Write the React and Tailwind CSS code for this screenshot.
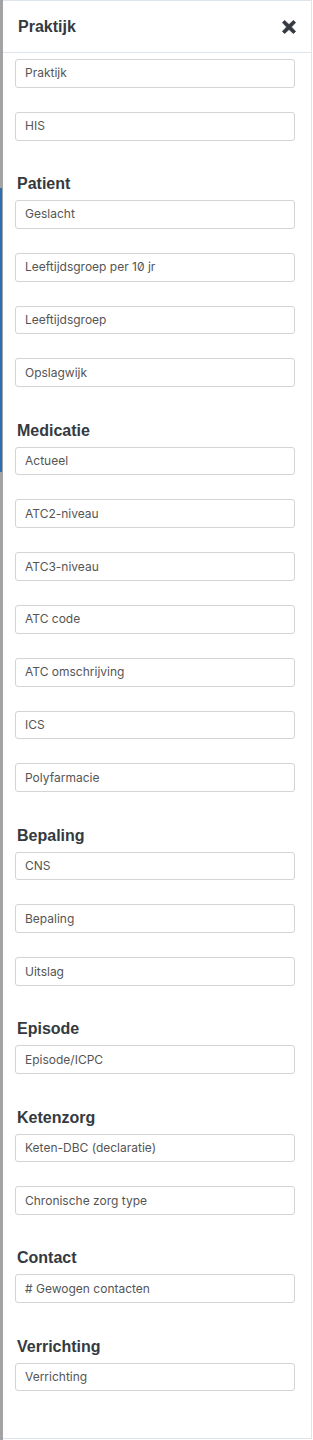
import React from "react";

const groups = [
  { title: null, fields: ["Praktijk", "HIS"] },
  { title: "Patient", fields: ["Geslacht", "Leeftijdsgroep per 10 jr", "Leeftijdsgroep", "Opslagwijk"] },
  {
    title: "Medicatie",
    fields: ["Actueel", "ATC2-niveau", "ATC3-niveau", "ATC code", "ATC omschrijving", "ICS", "Polyfarmacie"],
  },
  { title: "Bepaling", fields: ["CNS", "Bepaling", "Uitslag"] },
  { title: "Episode", fields: ["Episode/ICPC"] },
  { title: "Ketenzorg", fields: ["Keten-DBC (declaratie)", "Chronische zorg type"] },
  { title: "Contact", fields: ["# Gewogen contacten"] },
  { title: "Verrichting", fields: ["Verrichting"] },
];

// heavy "times" glyph, flared ends like the old font-awesome close icon
function CloseIcon() {
  return (
    <svg width="14" height="14" viewBox="0 0 14 14" className="text-[#343a40]">
      <path
        d="M0.4 2.6 L2.6 0.4 L7 4.6 L11.4 0.4 L13.6 2.6 L9.4 7 L13.6 11.4 L11.4 13.6 L7 9.4 L2.6 13.6 L0.4 11.4 L4.6 7 Z"
        fill="currentColor"
        stroke="currentColor"
        strokeWidth="0.8"
        strokeLinejoin="round"
      />
    </svg>
  );
}

function Field({ label }) {
  return (
    <div className="mb-6 flex h-[28.8px] w-[280px] items-center rounded-[3px] border border-[#d4d4d4] bg-white pl-[9px] text-[12px] text-[#555] [font-family:Inter,'Noto_Sans',sans-serif] [font-feature-settings:'zero']">
      {label}
    </div>
  );
}

export default function App() {
  return (
    <div className="flex h-[1440px] w-[313px] bg-white">
      <div className="flex w-[3px] flex-col bg-[#a3a3a3]">
        <div className="h-[188px]" />
        <div className="h-[284px] w-[2px] bg-[#2a6fb0]" />
      </div>
      <div className="flex h-[1439px] w-[309px] flex-col border-t border-r border-b border-[#dde4ec] bg-white">
        <div className="flex h-[52px] shrink-0 items-center justify-between border-b border-[#dde4ec] pl-[15px] pr-[15px]">
          <span className="pt-[1px] text-[16px] font-bold text-[#343a40] [font-family:'Liberation_Sans',Arial,sans-serif]">
            Praktijk
          </span>
          <CloseIcon />
        </div>
        <div className="flex flex-col pl-[12px] pt-[6px]">
          {groups.map((g, i) => (
            <div key={i} className="flex flex-col">
              {g.title && (
                <div className="flex h-[35.4px] items-end pb-[6px] pl-[2px] text-[16px] font-bold leading-[20px] text-[#343a40] [font-family:'Liberation_Sans',Arial,sans-serif]">
                  {g.title}
                </div>
              )}
              {g.fields.map((f) => (
                <Field key={f} label={f} />
              ))}
            </div>
          ))}
        </div>
      </div>
    </div>
  );
}
